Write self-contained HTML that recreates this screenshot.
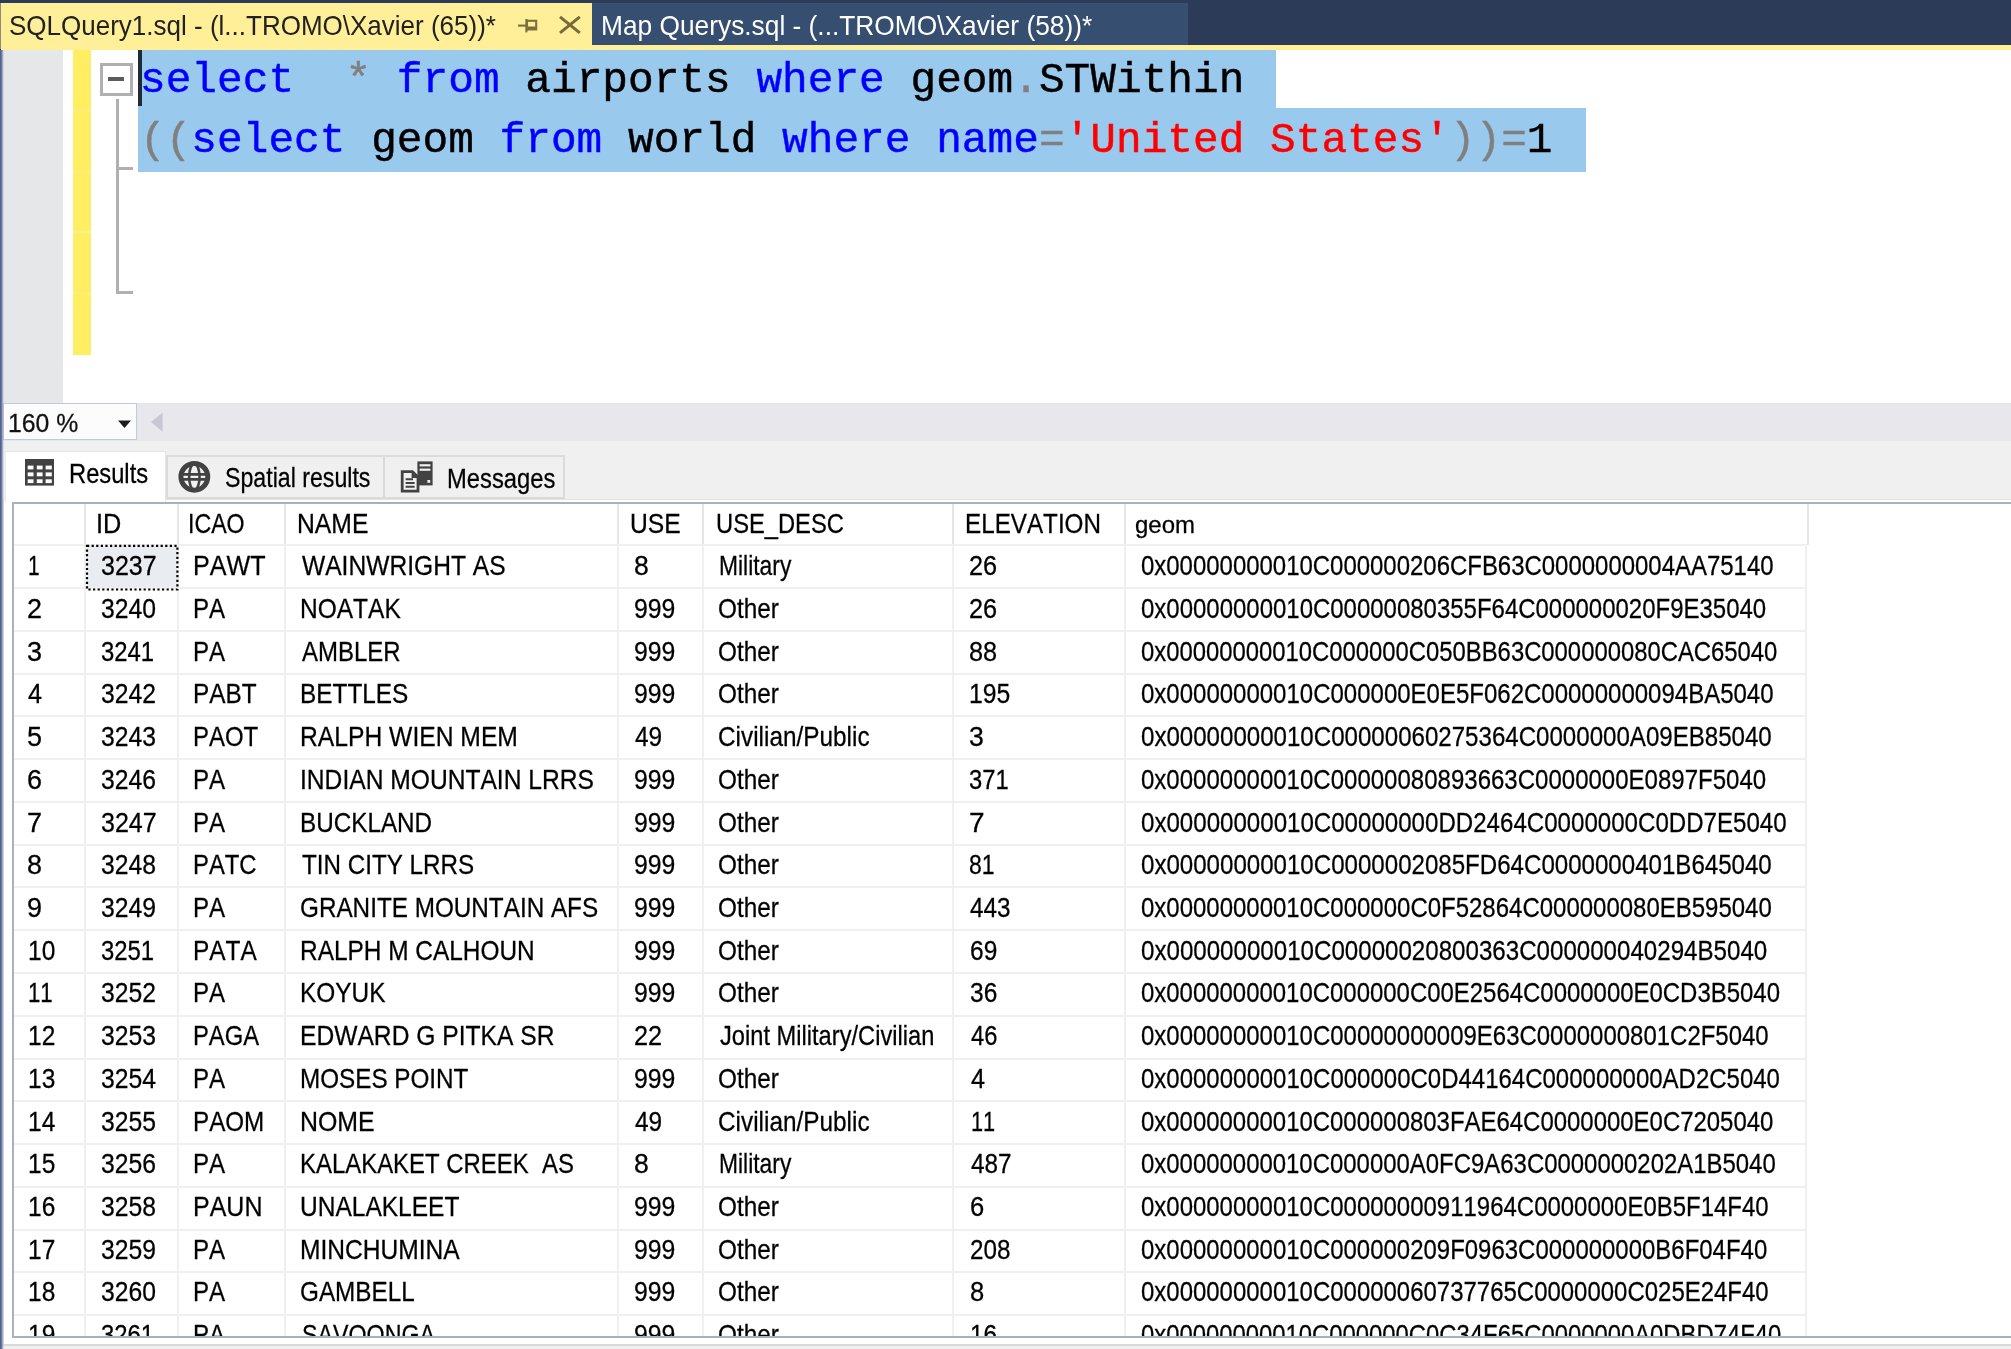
<!DOCTYPE html>
<html><head><meta charset="utf-8"><title>SSMS</title>
<style>
html,body{margin:0;padding:0}
body{width:2011px;height:1349px;position:relative;overflow:hidden;background:#fff;font-family:"Liberation Sans",sans-serif;font-kerning:none;color:#000}
.a{position:absolute}
.t{position:absolute;white-space:pre;transform-origin:0 50%;font-kerning:none;-webkit-text-stroke:0.28px}
.code{position:absolute;white-space:pre;font-family:"Liberation Mono",monospace;transform-origin:0 50%;color:#000;-webkit-text-stroke:0.45px}
.kw{color:#0000ff}.op{color:#808080}.st{color:#ff0000}
.vl{position:absolute;width:2px;background:#f0f0f0}
.hl{position:absolute;height:2px;background:#f0f0f0}
</style></head><body>
<!-- ===== document tab well ===== -->
<div class="a" style="left:0;top:0;width:2011px;height:50px;background:#2b3b58"></div>
<div class="a" style="left:590px;top:2.5px;width:598px;height:44px;background:#364e6f"></div>
<div class="a" style="left:1px;top:44.5px;width:2010px;height:5px;background:#feef98"></div>
<div class="a" style="left:1px;top:2.5px;width:591.4px;height:47px;background:#feef98"></div>
<div class="a" style="left:0;top:3px;width:1px;height:46px;background:#8a8b78"></div>
<!-- pin icon -->
<svg class="a" style="left:514px;top:12px" width="28" height="26" viewBox="0 0 28 26"><g fill="none" stroke="#7b6f3c" stroke-width="2.1"><path d="M4 13.6 H12"/><path d="M12.4 7 V20.4"/><rect x="13" y="8.8" width="9.2" height="8.6"/><path d="M13 16 H22.4" stroke-width="3"/></g></svg>
<!-- close icon -->
<svg class="a" style="left:556px;top:12px" width="28" height="26" viewBox="0 0 28 26"><g fill="none" stroke="#786b3b" stroke-width="3"><path d="M4 4.8 L23.8 20.8"/><path d="M23.8 4.8 L4 20.8"/></g></svg>

<!-- ===== editor ===== -->
<div class="a" style="left:0;top:49.5px;width:2011px;height:353.5px;background:#fff"></div>
<div class="a" style="left:2px;top:49.5px;width:61.4px;height:353.3px;background:#e6e7e8"></div>
<div class="a" style="left:73px;top:49.5px;width:17.6px;height:305.6px;background:#ffee62"></div>
<div class="a" style="left:73px;top:110.0px;width:17.6px;height:1.4px;background:#fff18c"></div>
<div class="a" style="left:73px;top:170.8px;width:17.6px;height:1.4px;background:#fff18c"></div>
<div class="a" style="left:73px;top:231.4px;width:17.6px;height:1.4px;background:#fff18c"></div>
<div class="a" style="left:73px;top:292.6px;width:17.6px;height:1.4px;background:#fff18c"></div>
<!-- selection -->
<div class="a" style="left:138px;top:49.5px;width:1138.3px;height:60px;background:#9ac9ee"></div>
<div class="a" style="left:138px;top:107.6px;width:1447.6px;height:64.9px;background:#9ac9ee"></div>
<!-- caret -->
<div class="a" style="left:137.8px;top:49.5px;width:4.3px;height:56.4px;background:#1f2a35"></div>
<!-- outlining -->
<div class="a" style="left:116.1px;top:99.2px;width:3.2px;height:195px;background:#b0b0b0"></div>
<div class="a" style="left:117px;top:167.3px;width:15.6px;height:3px;background:#b0b0b0"></div>
<div class="a" style="left:117px;top:291.2px;width:15.6px;height:3px;background:#b0b0b0"></div>
<div class="a" style="left:100px;top:63.2px;width:26.8px;height:27.2px;border:3px solid #b0b0b0;background:#fff"></div>
<div class="a" style="left:107.6px;top:77.2px;width:16.6px;height:3.6px;background:#5c5c5c"></div>
<!-- code -->
<div class="a" style="left:0;top:0;width:2011px;height:400px;filter:blur(0.55px)">
<div class="code" id="l1" style="left:140px;top:55.6px;font-size:42px;line-height:50px;height:50px;transform:scaleX(1.0189)"><span class="kw">select</span>  <span class="op">*</span> <span class="kw">from</span> airports <span class="kw">where</span> geom<span class="op">.</span>STWithin</div>
<div class="code" id="l2" style="left:140px;top:116.2px;font-size:42px;line-height:50px;height:50px;transform:scaleX(1.0189)"><span class="op">((</span><span class="kw">select</span> geom <span class="kw">from</span> world <span class="kw">where</span> <span class="kw">name</span><span class="op">=</span><span class="st">'United States'</span><span class="op">))=</span>1</div>
</div>

<!-- ===== zoom / scroll bar ===== -->
<div class="a" style="left:0;top:403px;width:2011px;height:38px;background:#e8e8ec"></div>
<div class="a" style="left:3px;top:403.4px;width:131.5px;height:34.6px;border:1.8px solid #c0c9df;background:#fcfcfc"></div>
<svg class="a" style="left:116px;top:418px" width="18" height="12" viewBox="0 0 18 12"><path d="M2 2.6 H15 L8.5 10 Z" fill="#1e1e1e"/></svg>
<svg class="a" style="left:149px;top:410px" width="16" height="24" viewBox="0 0 16 24"><path d="M13.6 2.4 V21.8 L2 12.1 Z" fill="#c6c7d3"/></svg>

<!-- ===== results pane ===== -->
<div class="a" style="left:0;top:441px;width:2011px;height:908px;background:#f0f0f0"></div>
<!-- tabs -->
<div class="a" style="left:3.4px;top:498.6px;width:2008px;height:845.6px;background:#fff;border-left:1.2px solid #e2e2e2;border-bottom:1.4px solid #dadada;border-top:1px solid #e2e2e2"></div>
<div class="a" style="left:166px;top:455px;width:215px;height:40px;border:2px solid #dbdbdb;background:#f0f0f0"></div>
<div class="a" style="left:385px;top:455px;width:178px;height:40px;border:2px solid #dbdbdb;border-left-width:0;background:#f0f0f0"></div>
<div class="a" style="left:4.6px;top:451px;width:159.6px;height:50px;border:1.5px solid #e6e6e6;border-bottom:0;border-left-color:#ececec;background:#fff"></div>
<!-- results icon -->
<svg class="a" style="left:25.3px;top:459.2px" width="29" height="26.6" viewBox="0 0 29 26.6"><rect width="29" height="26.6" fill="#424242"/><g fill="#fff"><rect x="2.7" y="6.6" width="5.8" height="3.8"/><rect x="11.8" y="6.6" width="5.8" height="3.8"/><rect x="20.6" y="6.6" width="6.2" height="3.8"/><rect x="2.7" y="13.4" width="5.8" height="3.9"/><rect x="11.8" y="13.4" width="5.8" height="3.9"/><rect x="20.6" y="13.4" width="6.2" height="3.9"/><rect x="2.7" y="20.3" width="5.8" height="3.8"/><rect x="11.8" y="20.3" width="5.8" height="3.8"/><rect x="20.6" y="20.3" width="6.2" height="3.8"/></g></svg>
<!-- globe icon -->
<svg class="a" style="left:177px;top:460px" width="35" height="35" viewBox="0 0 35 35"><g fill="none" stroke="#424242"><circle cx="17.35" cy="16.85" r="13.4" stroke-width="5"/><path d="M4 14.35 H31 M4 19.35 H31" stroke-width="2.8"/><ellipse cx="17.35" cy="16.85" rx="5.2" ry="13.2" stroke-width="2.6"/></g></svg>
<!-- messages icon -->
<svg class="a" style="left:399px;top:459px" width="36" height="36" viewBox="0 0 36 36"><rect x="18.4" y="2.4" width="15.2" height="24" fill="#424242"/><rect x="20.6" y="5.2" width="10.8" height="2.2" fill="#f0f0f0"/><rect x="20.6" y="9.6" width="10.8" height="2.2" fill="#f0f0f0"/><rect x="28.4" y="21" width="2.8" height="2.8" fill="#f0f0f0"/><path d="M1.8 11.2 H14 L20.4 17.6 V33.6 H1.8 Z" fill="#424242"/><path d="M4.6 14 H12.6 V19 H17.6 V30.8 H4.6 Z" fill="#f0f0f0"/><path d="M6.6 20.2 H14 M6.6 24 H15.6 M6.6 27.8 H15.6" stroke="#424242" stroke-width="2" fill="none"/></svg>

<!-- grid frame -->
<div class="a" style="left:12px;top:501.8px;width:1999px;height:836.4px;background:#abb0bd"></div>
<div class="a" style="left:14.2px;top:504px;width:1996.8px;height:832.2px;background:#fff"></div>
<!-- focused cell -->
<div class="a" style="left:86.6px;top:545.6px;width:90.4px;height:42.4px;background:#e9edf1"></div>
<div class="vl" style="left:83.6px;top:504px;height:41.4px;background:#e6e6e6"></div>
<div class="vl" style="left:83.6px;top:545.4px;height:790.6px"></div>
<div class="vl" style="left:176.5px;top:504px;height:41.4px;background:#e6e6e6"></div>
<div class="vl" style="left:176.5px;top:545.4px;height:790.6px"></div>
<div class="vl" style="left:284.4px;top:504px;height:41.4px;background:#e6e6e6"></div>
<div class="vl" style="left:284.4px;top:545.4px;height:790.6px"></div>
<div class="vl" style="left:616.8px;top:504px;height:41.4px;background:#e6e6e6"></div>
<div class="vl" style="left:616.8px;top:545.4px;height:790.6px"></div>
<div class="vl" style="left:702.4px;top:504px;height:41.4px;background:#e6e6e6"></div>
<div class="vl" style="left:702.4px;top:545.4px;height:790.6px"></div>
<div class="vl" style="left:952.3px;top:504px;height:41.4px;background:#e6e6e6"></div>
<div class="vl" style="left:952.3px;top:545.4px;height:790.6px"></div>
<div class="vl" style="left:1123.5px;top:504px;height:41.4px;background:#e6e6e6"></div>
<div class="vl" style="left:1123.5px;top:545.4px;height:790.6px"></div>
<div class="vl" style="left:1807px;top:504px;height:41.4px;background:#e6e6e6"></div>
<div class="vl" style="left:1805px;top:545.4px;height:790.6px"></div>
<div class="hl" style="left:14.2px;top:544.40px;width:1793px"></div>
<div class="hl" style="left:14.2px;top:587.16px;width:1793px"></div>
<div class="hl" style="left:14.2px;top:629.92px;width:1793px"></div>
<div class="hl" style="left:14.2px;top:672.68px;width:1793px"></div>
<div class="hl" style="left:14.2px;top:715.44px;width:1793px"></div>
<div class="hl" style="left:14.2px;top:758.20px;width:1793px"></div>
<div class="hl" style="left:14.2px;top:800.96px;width:1793px"></div>
<div class="hl" style="left:14.2px;top:843.72px;width:1793px"></div>
<div class="hl" style="left:14.2px;top:886.48px;width:1793px"></div>
<div class="hl" style="left:14.2px;top:929.24px;width:1793px"></div>
<div class="hl" style="left:14.2px;top:972.00px;width:1793px"></div>
<div class="hl" style="left:14.2px;top:1014.76px;width:1793px"></div>
<div class="hl" style="left:14.2px;top:1057.52px;width:1793px"></div>
<div class="hl" style="left:14.2px;top:1100.28px;width:1793px"></div>
<div class="hl" style="left:14.2px;top:1143.04px;width:1793px"></div>
<div class="hl" style="left:14.2px;top:1185.80px;width:1793px"></div>
<div class="hl" style="left:14.2px;top:1228.56px;width:1793px"></div>
<div class="hl" style="left:14.2px;top:1271.32px;width:1793px"></div>
<div class="hl" style="left:14.2px;top:1314.08px;width:1793px"></div>
<svg class="a" style="left:84px;top:542px" width="98" height="52" viewBox="0 0 98 52"><rect x="3" y="3.9" width="90.4" height="43.6" fill="none" stroke="#000" stroke-width="2.2" stroke-dasharray="2.2 2.4"/></svg>
<div class="a" id="txt" style="left:0;top:0;width:2011px;height:1349px;filter:blur(0.5px)">
<div class="t" style="left:8.86px;top:8.07px;font-size:27.8px;line-height:36px;height:36px;transform:scaleX(0.9355);color:#222;-webkit-text-stroke:0;">SQLQuery1.sql - (l...TROMO\Xavier (65))*</div>
<div class="t" style="left:600.61px;top:8.17px;font-size:27.8px;line-height:36px;height:36px;transform:scaleX(0.9465);color:#fff;-webkit-text-stroke:0;">Map Querys.sql - (...TROMO\Xavier (58))*</div>
<div class="t" style="left:8.01px;top:407.14px;font-size:25px;line-height:32px;height:32px;transform:scaleX(0.9906);color:#111;">160 %</div>
<div class="t" style="left:69.04px;top:454.92px;font-size:28.5px;line-height:37px;height:37px;transform:scaleX(0.8321);">Results</div>
<div class="t" style="left:225.19px;top:459.22px;font-size:28.5px;line-height:37px;height:37px;transform:scaleX(0.8124);">Spatial results</div>
<div class="t" style="left:446.83px;top:459.62px;font-size:28.5px;line-height:37px;height:37px;transform:scaleX(0.8344);">Messages</div>
<div class="t" style="left:96.49px;top:505.60px;font-size:28px;line-height:36px;height:36px;transform:scaleX(0.9040);">ID</div>
<div class="t" style="left:188.35px;top:505.60px;font-size:28px;line-height:36px;height:36px;transform:scaleX(0.8268);">ICAO</div>
<div class="t" style="left:296.54px;top:505.60px;font-size:28px;line-height:36px;height:36px;transform:scaleX(0.8821);">NAME</div>
<div class="t" style="left:629.94px;top:505.60px;font-size:28px;line-height:36px;height:36px;transform:scaleX(0.8798);">USE</div>
<div class="t" style="left:715.61px;top:505.60px;font-size:28px;line-height:36px;height:36px;transform:scaleX(0.8472);">USE_DESC</div>
<div class="t" style="left:964.97px;top:505.60px;font-size:28px;line-height:36px;height:36px;transform:scaleX(0.8651);">ELEVATION</div>
<div class="t" style="left:1134.72px;top:509.11px;font-size:24.5px;line-height:32px;height:32px;transform:scaleX(0.9783);">geom</div>
<div class="t" style="left:27.81px;top:548.20px;font-size:28px;line-height:36px;height:36px;transform:scaleX(0.7462);">1</div>
<div class="t" style="left:100.81px;top:548.20px;font-size:28px;line-height:36px;height:36px;transform:scaleX(0.8943);">3237</div>
<div class="t" style="left:192.51px;top:548.20px;font-size:28px;line-height:36px;height:36px;transform:scaleX(0.8974);">PAWT</div>
<div class="t" style="left:302.00px;top:548.20px;font-size:28px;line-height:36px;height:36px;transform:scaleX(0.8784);">WAINWRIGHT AS</div>
<div class="t" style="left:634.05px;top:548.20px;font-size:28px;line-height:36px;height:36px;transform:scaleX(0.9500);">8</div>
<div class="t" style="left:719.37px;top:548.20px;font-size:28px;line-height:36px;height:36px;transform:scaleX(0.8158);">Military</div>
<div class="t" style="left:969.10px;top:548.20px;font-size:28px;line-height:36px;height:36px;transform:scaleX(0.9029);">26</div>
<div class="t" style="left:1141.14px;top:548.20px;font-size:28px;line-height:36px;height:36px;transform:scaleX(0.8553);">0x00000000010C000000206CFB63C0000000004AA75140</div>
<div class="t" style="left:26.54px;top:590.92px;font-size:28px;line-height:36px;height:36px;transform:scaleX(0.9643);">2</div>
<div class="t" style="left:100.82px;top:590.92px;font-size:28px;line-height:36px;height:36px;transform:scaleX(0.8828);">3240</div>
<div class="t" style="left:192.58px;top:590.92px;font-size:28px;line-height:36px;height:36px;transform:scaleX(0.8605);">PA</div>
<div class="t" style="left:299.95px;top:590.92px;font-size:28px;line-height:36px;height:36px;transform:scaleX(0.8752);">NOATAK</div>
<div class="t" style="left:634.11px;top:590.92px;font-size:28px;line-height:36px;height:36px;transform:scaleX(0.8860);">999</div>
<div class="t" style="left:718.43px;top:590.92px;font-size:28px;line-height:36px;height:36px;transform:scaleX(0.8690);">Other</div>
<div class="t" style="left:969.10px;top:590.92px;font-size:28px;line-height:36px;height:36px;transform:scaleX(0.9029);">26</div>
<div class="t" style="left:1141.14px;top:590.92px;font-size:28px;line-height:36px;height:36px;transform:scaleX(0.8561);">0x00000000010C00000080355F64C000000020F9E35040</div>
<div class="t" style="left:26.54px;top:633.64px;font-size:28px;line-height:36px;height:36px;transform:scaleX(0.9643);">3</div>
<div class="t" style="left:100.85px;top:633.64px;font-size:28px;line-height:36px;height:36px;transform:scaleX(0.8531);">3241</div>
<div class="t" style="left:192.58px;top:633.64px;font-size:28px;line-height:36px;height:36px;transform:scaleX(0.8605);">PA</div>
<div class="t" style="left:301.70px;top:633.64px;font-size:28px;line-height:36px;height:36px;transform:scaleX(0.8567);">AMBLER</div>
<div class="t" style="left:634.11px;top:633.64px;font-size:28px;line-height:36px;height:36px;transform:scaleX(0.8860);">999</div>
<div class="t" style="left:718.43px;top:633.64px;font-size:28px;line-height:36px;height:36px;transform:scaleX(0.8690);">Other</div>
<div class="t" style="left:969.10px;top:633.64px;font-size:28px;line-height:36px;height:36px;transform:scaleX(0.9029);">88</div>
<div class="t" style="left:1141.15px;top:633.64px;font-size:28px;line-height:36px;height:36px;transform:scaleX(0.8515);">0x00000000010C000000C050BB63C000000080CAC65040</div>
<div class="t" style="left:27.50px;top:676.36px;font-size:28px;line-height:36px;height:36px;transform:scaleX(0.9000);">4</div>
<div class="t" style="left:100.82px;top:676.36px;font-size:28px;line-height:36px;height:36px;transform:scaleX(0.8828);">3242</div>
<div class="t" style="left:192.56px;top:676.36px;font-size:28px;line-height:36px;height:36px;transform:scaleX(0.8687);">PABT</div>
<div class="t" style="left:299.96px;top:676.36px;font-size:28px;line-height:36px;height:36px;transform:scaleX(0.8702);">BETTLES</div>
<div class="t" style="left:634.11px;top:676.36px;font-size:28px;line-height:36px;height:36px;transform:scaleX(0.8860);">999</div>
<div class="t" style="left:718.43px;top:676.36px;font-size:28px;line-height:36px;height:36px;transform:scaleX(0.8690);">Other</div>
<div class="t" style="left:969.23px;top:676.36px;font-size:28px;line-height:36px;height:36px;transform:scaleX(0.8835);">195</div>
<div class="t" style="left:1141.14px;top:676.36px;font-size:28px;line-height:36px;height:36px;transform:scaleX(0.8571);">0x00000000010C000000E0E5F062C00000000094BA5040</div>
<div class="t" style="left:26.54px;top:719.08px;font-size:28px;line-height:36px;height:36px;transform:scaleX(0.9643);">5</div>
<div class="t" style="left:100.82px;top:719.08px;font-size:28px;line-height:36px;height:36px;transform:scaleX(0.8828);">3243</div>
<div class="t" style="left:192.59px;top:719.08px;font-size:28px;line-height:36px;height:36px;transform:scaleX(0.8552);">PAOT</div>
<div class="t" style="left:299.94px;top:719.08px;font-size:28px;line-height:36px;height:36px;transform:scaleX(0.8810);">RALPH WIEN MEM</div>
<div class="t" style="left:635.00px;top:719.08px;font-size:28px;line-height:36px;height:36px;transform:scaleX(0.8733);">49</div>
<div class="t" style="left:718.43px;top:719.08px;font-size:28px;line-height:36px;height:36px;transform:scaleX(0.8696);">Civilian/Public</div>
<div class="t" style="left:969.05px;top:719.08px;font-size:28px;line-height:36px;height:36px;transform:scaleX(0.9500);">3</div>
<div class="t" style="left:1141.14px;top:719.08px;font-size:28px;line-height:36px;height:36px;transform:scaleX(0.8601);">0x00000000010C00000060275364C0000000A09EB85040</div>
<div class="t" style="left:26.54px;top:761.80px;font-size:28px;line-height:36px;height:36px;transform:scaleX(0.9643);">6</div>
<div class="t" style="left:100.82px;top:761.80px;font-size:28px;line-height:36px;height:36px;transform:scaleX(0.8828);">3246</div>
<div class="t" style="left:192.58px;top:761.80px;font-size:28px;line-height:36px;height:36px;transform:scaleX(0.8605);">PA</div>
<div class="t" style="left:299.94px;top:761.80px;font-size:28px;line-height:36px;height:36px;transform:scaleX(0.8789);">INDIAN MOUNTAIN LRRS</div>
<div class="t" style="left:634.11px;top:761.80px;font-size:28px;line-height:36px;height:36px;transform:scaleX(0.8860);">999</div>
<div class="t" style="left:718.43px;top:761.80px;font-size:28px;line-height:36px;height:36px;transform:scaleX(0.8690);">Other</div>
<div class="t" style="left:969.15px;top:761.80px;font-size:28px;line-height:36px;height:36px;transform:scaleX(0.8484);">371</div>
<div class="t" style="left:1141.14px;top:761.80px;font-size:28px;line-height:36px;height:36px;transform:scaleX(0.8579);">0x00000000010C00000080893663C0000000E0897F5040</div>
<div class="t" style="left:26.54px;top:804.52px;font-size:28px;line-height:36px;height:36px;transform:scaleX(0.9643);">7</div>
<div class="t" style="left:100.81px;top:804.52px;font-size:28px;line-height:36px;height:36px;transform:scaleX(0.8943);">3247</div>
<div class="t" style="left:192.58px;top:804.52px;font-size:28px;line-height:36px;height:36px;transform:scaleX(0.8605);">PA</div>
<div class="t" style="left:299.97px;top:804.52px;font-size:28px;line-height:36px;height:36px;transform:scaleX(0.8663);">BUCKLAND</div>
<div class="t" style="left:634.11px;top:804.52px;font-size:28px;line-height:36px;height:36px;transform:scaleX(0.8860);">999</div>
<div class="t" style="left:718.43px;top:804.52px;font-size:28px;line-height:36px;height:36px;transform:scaleX(0.8690);">Other</div>
<div class="t" style="left:969.00px;top:804.52px;font-size:28px;line-height:36px;height:36px;transform:scaleX(1.0000);">7</div>
<div class="t" style="left:1141.14px;top:804.52px;font-size:28px;line-height:36px;height:36px;transform:scaleX(0.8604);">0x00000000010C00000000DD2464C0000000C0DD7E5040</div>
<div class="t" style="left:26.54px;top:847.24px;font-size:28px;line-height:36px;height:36px;transform:scaleX(0.9643);">8</div>
<div class="t" style="left:100.82px;top:847.24px;font-size:28px;line-height:36px;height:36px;transform:scaleX(0.8828);">3248</div>
<div class="t" style="left:192.60px;top:847.24px;font-size:28px;line-height:36px;height:36px;transform:scaleX(0.8516);">PATC</div>
<div class="t" style="left:301.70px;top:847.24px;font-size:28px;line-height:36px;height:36px;transform:scaleX(0.8647);">TIN CITY LRRS</div>
<div class="t" style="left:634.11px;top:847.24px;font-size:28px;line-height:36px;height:36px;transform:scaleX(0.8860);">999</div>
<div class="t" style="left:718.43px;top:847.24px;font-size:28px;line-height:36px;height:36px;transform:scaleX(0.8690);">Other</div>
<div class="t" style="left:969.18px;top:847.24px;font-size:28px;line-height:36px;height:36px;transform:scaleX(0.8217);">81</div>
<div class="t" style="left:1141.14px;top:847.24px;font-size:28px;line-height:36px;height:36px;transform:scaleX(0.8601);">0x00000000010C0000002085FD64C0000000401B645040</div>
<div class="t" style="left:26.54px;top:889.96px;font-size:28px;line-height:36px;height:36px;transform:scaleX(0.9643);">9</div>
<div class="t" style="left:100.82px;top:889.96px;font-size:28px;line-height:36px;height:36px;transform:scaleX(0.8828);">3249</div>
<div class="t" style="left:192.58px;top:889.96px;font-size:28px;line-height:36px;height:36px;transform:scaleX(0.8605);">PA</div>
<div class="t" style="left:300.13px;top:889.96px;font-size:28px;line-height:36px;height:36px;transform:scaleX(0.8672);">GRANITE MOUNTAIN AFS</div>
<div class="t" style="left:634.11px;top:889.96px;font-size:28px;line-height:36px;height:36px;transform:scaleX(0.8860);">999</div>
<div class="t" style="left:718.43px;top:889.96px;font-size:28px;line-height:36px;height:36px;transform:scaleX(0.8690);">Other</div>
<div class="t" style="left:970.00px;top:889.96px;font-size:28px;line-height:36px;height:36px;transform:scaleX(0.8668);">443</div>
<div class="t" style="left:1141.14px;top:889.96px;font-size:28px;line-height:36px;height:36px;transform:scaleX(0.8565);">0x00000000010C000000C0F52864C000000080EB595040</div>
<div class="t" style="left:27.55px;top:932.68px;font-size:28px;line-height:36px;height:36px;transform:scaleX(0.8750);">10</div>
<div class="t" style="left:100.85px;top:932.68px;font-size:28px;line-height:36px;height:36px;transform:scaleX(0.8531);">3251</div>
<div class="t" style="left:192.55px;top:932.68px;font-size:28px;line-height:36px;height:36px;transform:scaleX(0.8733);">PATA</div>
<div class="t" style="left:299.96px;top:932.68px;font-size:28px;line-height:36px;height:36px;transform:scaleX(0.8719);">RALPH M CALHOUN</div>
<div class="t" style="left:634.11px;top:932.68px;font-size:28px;line-height:36px;height:36px;transform:scaleX(0.8860);">999</div>
<div class="t" style="left:718.43px;top:932.68px;font-size:28px;line-height:36px;height:36px;transform:scaleX(0.8690);">Other</div>
<div class="t" style="left:970.02px;top:932.68px;font-size:28px;line-height:36px;height:36px;transform:scaleX(0.8758);">69</div>
<div class="t" style="left:1141.14px;top:932.68px;font-size:28px;line-height:36px;height:36px;transform:scaleX(0.8612);">0x00000000010C00000020800363C000000040294B5040</div>
<div class="t" style="left:27.71px;top:975.40px;font-size:28px;line-height:36px;height:36px;transform:scaleX(0.7945);">11</div>
<div class="t" style="left:100.82px;top:975.40px;font-size:28px;line-height:36px;height:36px;transform:scaleX(0.8828);">3252</div>
<div class="t" style="left:192.58px;top:975.40px;font-size:28px;line-height:36px;height:36px;transform:scaleX(0.8605);">PA</div>
<div class="t" style="left:299.96px;top:975.40px;font-size:28px;line-height:36px;height:36px;transform:scaleX(0.8718);">KOYUK</div>
<div class="t" style="left:634.11px;top:975.40px;font-size:28px;line-height:36px;height:36px;transform:scaleX(0.8860);">999</div>
<div class="t" style="left:718.43px;top:975.40px;font-size:28px;line-height:36px;height:36px;transform:scaleX(0.8690);">Other</div>
<div class="t" style="left:970.02px;top:975.40px;font-size:28px;line-height:36px;height:36px;transform:scaleX(0.8758);">36</div>
<div class="t" style="left:1141.15px;top:975.40px;font-size:28px;line-height:36px;height:36px;transform:scaleX(0.8550);">0x00000000010C000000C00E2564C0000000E0CD3B5040</div>
<div class="t" style="left:27.55px;top:1018.12px;font-size:28px;line-height:36px;height:36px;transform:scaleX(0.8750);">12</div>
<div class="t" style="left:100.82px;top:1018.12px;font-size:28px;line-height:36px;height:36px;transform:scaleX(0.8828);">3253</div>
<div class="t" style="left:192.60px;top:1018.12px;font-size:28px;line-height:36px;height:36px;transform:scaleX(0.8499);">PAGA</div>
<div class="t" style="left:299.94px;top:1018.12px;font-size:28px;line-height:36px;height:36px;transform:scaleX(0.8793);">EDWARD G PITKA SR</div>
<div class="t" style="left:634.10px;top:1018.12px;font-size:28px;line-height:36px;height:36px;transform:scaleX(0.9029);">22</div>
<div class="t" style="left:720.00px;top:1018.12px;font-size:28px;line-height:36px;height:36px;transform:scaleX(0.8451);">Joint Military/Civilian</div>
<div class="t" style="left:970.90px;top:1018.12px;font-size:28px;line-height:36px;height:36px;transform:scaleX(0.8472);">46</div>
<div class="t" style="left:1141.14px;top:1018.12px;font-size:28px;line-height:36px;height:36px;transform:scaleX(0.8559);">0x00000000010C00000000009E63C0000000801C2F5040</div>
<div class="t" style="left:27.55px;top:1060.84px;font-size:28px;line-height:36px;height:36px;transform:scaleX(0.8750);">13</div>
<div class="t" style="left:100.82px;top:1060.84px;font-size:28px;line-height:36px;height:36px;transform:scaleX(0.8828);">3254</div>
<div class="t" style="left:192.58px;top:1060.84px;font-size:28px;line-height:36px;height:36px;transform:scaleX(0.8605);">PA</div>
<div class="t" style="left:299.97px;top:1060.84px;font-size:28px;line-height:36px;height:36px;transform:scaleX(0.8661);">MOSES POINT</div>
<div class="t" style="left:634.11px;top:1060.84px;font-size:28px;line-height:36px;height:36px;transform:scaleX(0.8860);">999</div>
<div class="t" style="left:718.43px;top:1060.84px;font-size:28px;line-height:36px;height:36px;transform:scaleX(0.8690);">Other</div>
<div class="t" style="left:970.50px;top:1060.84px;font-size:28px;line-height:36px;height:36px;transform:scaleX(0.9000);">4</div>
<div class="t" style="left:1141.14px;top:1060.84px;font-size:28px;line-height:36px;height:36px;transform:scaleX(0.8568);">0x00000000010C000000C0D44164C000000000AD2C5040</div>
<div class="t" style="left:27.55px;top:1103.56px;font-size:28px;line-height:36px;height:36px;transform:scaleX(0.8750);">14</div>
<div class="t" style="left:100.82px;top:1103.56px;font-size:28px;line-height:36px;height:36px;transform:scaleX(0.8828);">3255</div>
<div class="t" style="left:192.57px;top:1103.56px;font-size:28px;line-height:36px;height:36px;transform:scaleX(0.8644);">PAOM</div>
<div class="t" style="left:299.92px;top:1103.56px;font-size:28px;line-height:36px;height:36px;transform:scaleX(0.8890);">NOME</div>
<div class="t" style="left:635.00px;top:1103.56px;font-size:28px;line-height:36px;height:36px;transform:scaleX(0.8733);">49</div>
<div class="t" style="left:718.43px;top:1103.56px;font-size:28px;line-height:36px;height:36px;transform:scaleX(0.8696);">Civilian/Public</div>
<div class="t" style="left:970.75px;top:1103.56px;font-size:28px;line-height:36px;height:36px;transform:scaleX(0.7770);">11</div>
<div class="t" style="left:1141.14px;top:1103.56px;font-size:28px;line-height:36px;height:36px;transform:scaleX(0.8551);">0x00000000010C000000803FAE64C0000000E0C7205040</div>
<div class="t" style="left:27.55px;top:1146.28px;font-size:28px;line-height:36px;height:36px;transform:scaleX(0.8750);">15</div>
<div class="t" style="left:100.82px;top:1146.28px;font-size:28px;line-height:36px;height:36px;transform:scaleX(0.8828);">3256</div>
<div class="t" style="left:192.58px;top:1146.28px;font-size:28px;line-height:36px;height:36px;transform:scaleX(0.8605);">PA</div>
<div class="t" style="left:299.99px;top:1146.28px;font-size:28px;line-height:36px;height:36px;transform:scaleX(0.8544);">KALAKAKET CREEK  AS</div>
<div class="t" style="left:634.05px;top:1146.28px;font-size:28px;line-height:36px;height:36px;transform:scaleX(0.9500);">8</div>
<div class="t" style="left:719.37px;top:1146.28px;font-size:28px;line-height:36px;height:36px;transform:scaleX(0.8158);">Military</div>
<div class="t" style="left:970.90px;top:1146.28px;font-size:28px;line-height:36px;height:36px;transform:scaleX(0.8690);">487</div>
<div class="t" style="left:1141.15px;top:1146.28px;font-size:28px;line-height:36px;height:36px;transform:scaleX(0.8547);">0x00000000010C000000A0FC9A63C0000000202A1B5040</div>
<div class="t" style="left:27.55px;top:1189.00px;font-size:28px;line-height:36px;height:36px;transform:scaleX(0.8750);">16</div>
<div class="t" style="left:100.82px;top:1189.00px;font-size:28px;line-height:36px;height:36px;transform:scaleX(0.8828);">3258</div>
<div class="t" style="left:192.51px;top:1189.00px;font-size:28px;line-height:36px;height:36px;transform:scaleX(0.8930);">PAUN</div>
<div class="t" style="left:299.95px;top:1189.00px;font-size:28px;line-height:36px;height:36px;transform:scaleX(0.8757);">UNALAKLEET</div>
<div class="t" style="left:634.11px;top:1189.00px;font-size:28px;line-height:36px;height:36px;transform:scaleX(0.8860);">999</div>
<div class="t" style="left:718.43px;top:1189.00px;font-size:28px;line-height:36px;height:36px;transform:scaleX(0.8690);">Other</div>
<div class="t" style="left:969.99px;top:1189.00px;font-size:28px;line-height:36px;height:36px;transform:scaleX(0.9143);">6</div>
<div class="t" style="left:1141.14px;top:1189.00px;font-size:28px;line-height:36px;height:36px;transform:scaleX(0.8559);">0x00000000010C00000000911964C0000000E0B5F14F40</div>
<div class="t" style="left:27.55px;top:1231.72px;font-size:28px;line-height:36px;height:36px;transform:scaleX(0.8750);">17</div>
<div class="t" style="left:100.82px;top:1231.72px;font-size:28px;line-height:36px;height:36px;transform:scaleX(0.8828);">3259</div>
<div class="t" style="left:192.58px;top:1231.72px;font-size:28px;line-height:36px;height:36px;transform:scaleX(0.8605);">PA</div>
<div class="t" style="left:299.94px;top:1231.72px;font-size:28px;line-height:36px;height:36px;transform:scaleX(0.8779);">MINCHUMINA</div>
<div class="t" style="left:634.11px;top:1231.72px;font-size:28px;line-height:36px;height:36px;transform:scaleX(0.8860);">999</div>
<div class="t" style="left:718.43px;top:1231.72px;font-size:28px;line-height:36px;height:36px;transform:scaleX(0.8690);">Other</div>
<div class="t" style="left:970.03px;top:1231.72px;font-size:28px;line-height:36px;height:36px;transform:scaleX(0.8661);">208</div>
<div class="t" style="left:1141.14px;top:1231.72px;font-size:28px;line-height:36px;height:36px;transform:scaleX(0.8558);">0x00000000010C000000209F0963C000000000B6F04F40</div>
<div class="t" style="left:27.55px;top:1274.44px;font-size:28px;line-height:36px;height:36px;transform:scaleX(0.8750);">18</div>
<div class="t" style="left:100.82px;top:1274.44px;font-size:28px;line-height:36px;height:36px;transform:scaleX(0.8828);">3260</div>
<div class="t" style="left:192.58px;top:1274.44px;font-size:28px;line-height:36px;height:36px;transform:scaleX(0.8605);">PA</div>
<div class="t" style="left:300.13px;top:1274.44px;font-size:28px;line-height:36px;height:36px;transform:scaleX(0.8668);">GAMBELL</div>
<div class="t" style="left:634.11px;top:1274.44px;font-size:28px;line-height:36px;height:36px;transform:scaleX(0.8860);">999</div>
<div class="t" style="left:718.43px;top:1274.44px;font-size:28px;line-height:36px;height:36px;transform:scaleX(0.8690);">Other</div>
<div class="t" style="left:969.99px;top:1274.44px;font-size:28px;line-height:36px;height:36px;transform:scaleX(0.9143);">8</div>
<div class="t" style="left:1141.14px;top:1274.44px;font-size:28px;line-height:36px;height:36px;transform:scaleX(0.8559);">0x00000000010C00000060737765C0000000C025E24F40</div>
<div class="t" style="left:27.55px;top:1317.16px;font-size:28px;line-height:36px;height:36px;transform:scaleX(0.8750);">19</div>
<div class="t" style="left:100.85px;top:1317.16px;font-size:28px;line-height:36px;height:36px;transform:scaleX(0.8531);">3261</div>
<div class="t" style="left:192.58px;top:1317.16px;font-size:28px;line-height:36px;height:36px;transform:scaleX(0.8605);">PA</div>
<div class="t" style="left:301.67px;top:1317.16px;font-size:28px;line-height:36px;height:36px;transform:scaleX(0.8303);">SAVOONGA</div>
<div class="t" style="left:634.11px;top:1317.16px;font-size:28px;line-height:36px;height:36px;transform:scaleX(0.8860);">999</div>
<div class="t" style="left:718.43px;top:1317.16px;font-size:28px;line-height:36px;height:36px;transform:scaleX(0.8690);">Other</div>
<div class="t" style="left:970.26px;top:1317.16px;font-size:28px;line-height:36px;height:36px;transform:scaleX(0.8680);">16</div>
<div class="t" style="left:1141.15px;top:1317.16px;font-size:28px;line-height:36px;height:36px;transform:scaleX(0.8516);">0x00000000010C000000C0C34F65C0000000A0DBD74F40</div>
</div>
<div class="a" style="left:12px;top:1336px;width:1999px;height:2.2px;background:#abb0bd"></div>
<div class="a" style="left:4.6px;top:1338.2px;width:2007px;height:6.2px;background:#fff"></div>
<div class="a" style="left:3.4px;top:1344.2px;width:2008px;height:1.4px;background:#dadada"></div>
<div class="a" style="left:2.2px;top:1345.6px;width:2009px;height:4px;background:#f0f0f0"></div>
<div class="a" style="left:0;top:49.5px;width:4px;height:1300px;background:linear-gradient(to right,rgba(82,97,135,1) 0,rgba(84,100,140,1) 1px,rgba(100,117,162,.8) 2px,rgba(120,136,182,.38) 3px,rgba(130,145,190,0) 4px)"></div>
</body></html>
